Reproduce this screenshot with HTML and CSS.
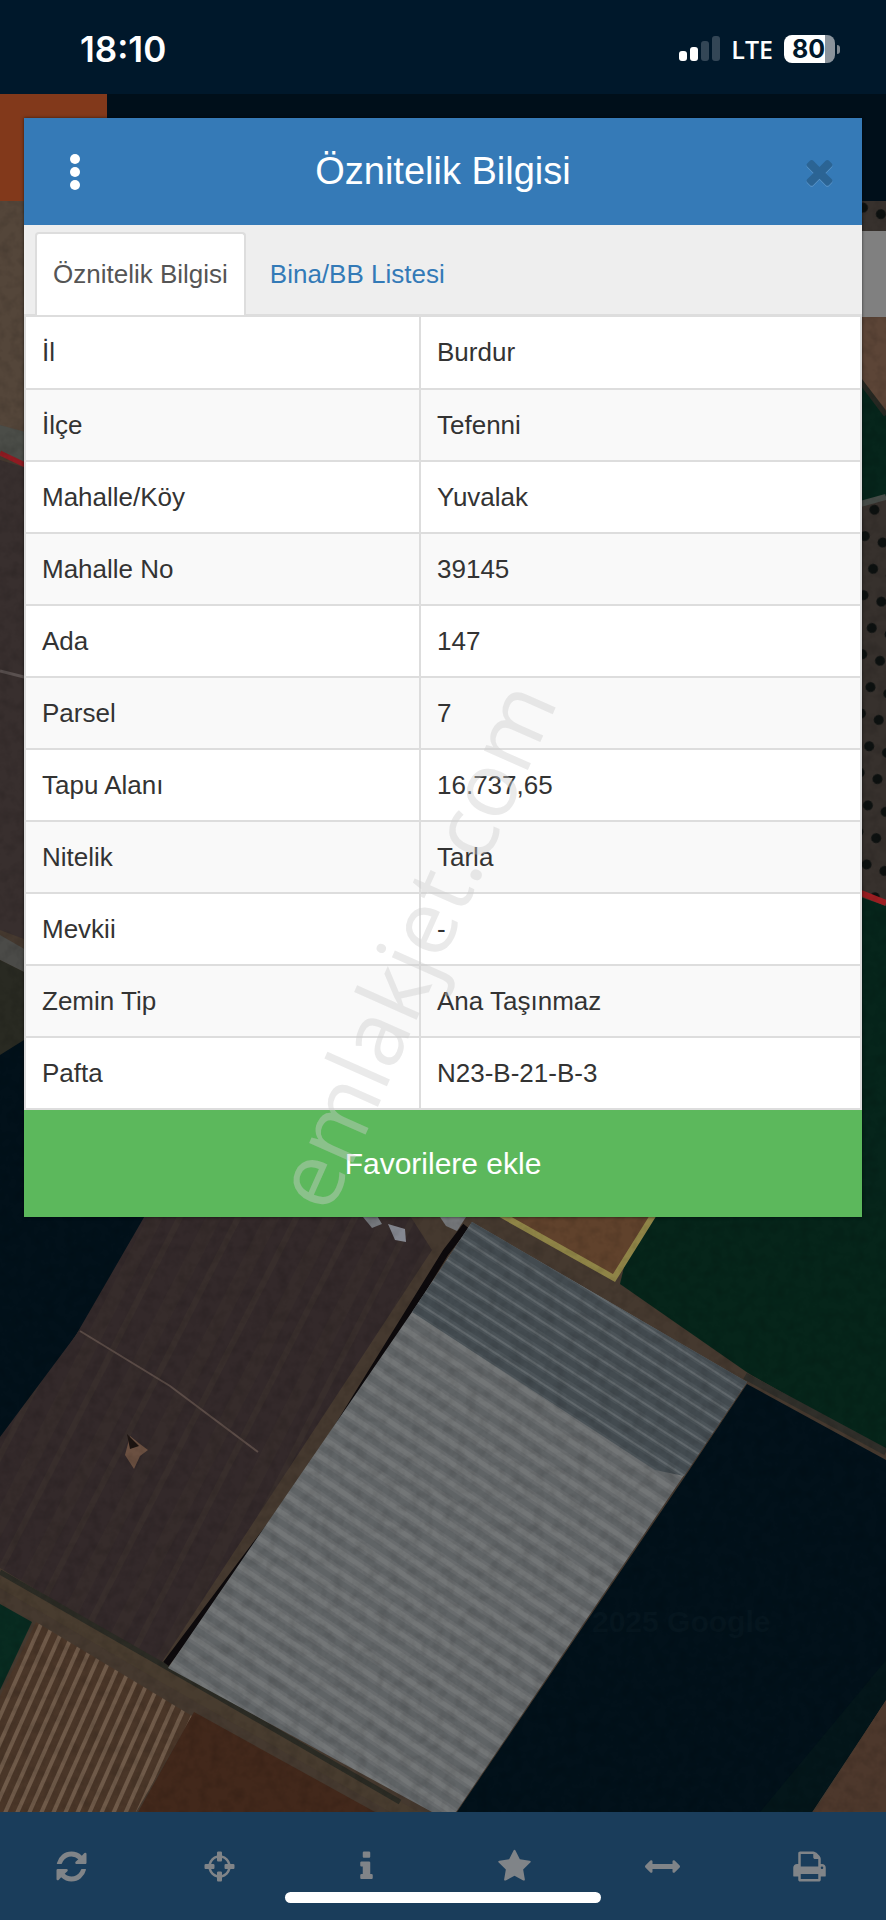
FILE: index.html
```html
<!DOCTYPE html>
<html lang="tr">
<head>
    <meta charset="UTF-8">
    <meta name="viewport" content="width=device-width, initial-scale=1.0">
    <title>Öznitelik Bilgisi</title>
    <link rel="stylesheet" href="styles.css">
</head>
<body>
    <header class="status-bar">
        <span class="clock">18:10</span>
        <div class="status-icons">
            <div class="signal">
                <i class="bar bar-1"></i>
                <i class="bar bar-2"></i>
                <i class="bar bar-3"></i>
                <i class="bar bar-4"></i>
            </div>
            <span class="network">LTE</span>
            <div class="battery"><span>80</span></div>
        </div>
    </header>

    <div class="navbar">
        <div class="navbar-brand"></div>
    </div>

    <main class="map">
        <svg class="map-image" viewBox="0 201 886 1611" preserveAspectRatio="xMidYMid slice" aria-hidden="true">
            <defs>
                <pattern id="plastic" width="40" height="17" patternUnits="userSpaceOnUse" patternTransform="rotate(34)">
                    <rect width="40" height="17" fill="#606466"/>
                    <rect width="40" height="11" y="3" fill="#696c6e"/>
                    <rect width="40" height="5" y="6" fill="#737677"/>
                </pattern>
                <pattern id="plasticDark" width="40" height="13" patternUnits="userSpaceOnUse" patternTransform="rotate(33)">
                    <rect width="40" height="13" fill="#434b50"/>
                    <rect width="40" height="7" y="3" fill="#4c5459"/>
                    <rect width="40" height="2" y="6" fill="#61686c"/>
                </pattern>
                <pattern id="soil" width="52" height="40" patternUnits="userSpaceOnUse" patternTransform="rotate(27)">
                    <rect width="52" height="40" fill="#33292a"/>
                    <rect width="14" height="40" x="8" fill="#362c2b"/>
                    <rect width="6" height="40" x="34" fill="#382e2c"/>
                </pattern>
                <pattern id="furrows" width="11" height="40" patternUnits="userSpaceOnUse" patternTransform="rotate(24)">
                    <rect width="11" height="40" fill="#4a3628"/>
                    <rect width="4" height="40" x="3" fill="#6f5a49"/>
                </pattern>
                <pattern id="trees" width="19" height="28" patternUnits="userSpaceOnUse" patternTransform="rotate(20)">
                    <rect width="19" height="28" fill="#37312d"/>
                    <ellipse cx="8" cy="12" rx="5" ry="5" fill="#0d1110"/>
                </pattern>
                <filter id="grain" x="0" y="0" width="100%" height="100%">
                    <feTurbulence type="fractalNoise" baseFrequency="0.09" numOctaves="3" seed="4"/>
                    <feColorMatrix values="0 0 0 0 0  0 0 0 0 0  0 0 0 0 0  0 0 0 -1.2 0.7"/>
                </filter>
            </defs>

            <rect y="201" width="886" height="1611" fill="#45392f"/>

            <!-- left side -->
            <path d="M0 201H40V440L0 425Z" fill="#54463a"/>
            <path d="M0 425L40 436V468L0 456Z" fill="#4b4d48"/>
            <path d="M0 460L40 472V945L0 930Z" fill="#382f2e"/>
            <path d="M0 671L40 681" stroke="#5a5150" stroke-width="3"/>
            <path d="M0 453L40 472" stroke="#8f1b22" stroke-width="5"/>
            <path d="M0 935L40 958V980L0 960Z" fill="#4b4b48"/>
            <path d="M0 960L40 980V1080L0 1070Z" fill="#292a22"/>
            <path d="M0 1055L40 1030V1217H154L76 1335L0 1450Z" fill="#02111a"/>

            <!-- right side -->
            <path d="M846 201H886V231H846Z" fill="url(#trees)"/>
            <path d="M846 317H886V410L846 360Z" fill="#5c4537"/>
            <path d="M846 360L886 415V500L846 510Z" fill="#06251b"/>
            <path d="M846 362L886 415" stroke="#262822" stroke-width="5"/>
            <path d="M846 508L886 496V900L846 888Z" fill="url(#trees)"/>
            <path d="M846 508L886 497" stroke="#454b47" stroke-width="6"/>
            <path d="M846 892L886 906V1217H846Z" fill="#06251b"/>
            <path d="M846 887L886 903" stroke="#9c1e22" stroke-width="6"/>

            <!-- green field -->
            <path d="M640 1200H886V1452L748 1373L620 1284Z" fill="#06251a"/>

            <!-- parcel with the yellow border -->
            <path d="M500 1214L614 1278L654 1214Z" fill="#60422c" stroke="#8f8447" stroke-width="6"/>

            <!-- ploughed field -->
            <path d="M154 1200H400L432 1250L160 1665L0 1568V1437L76 1335Z" fill="url(#soil)"/>
            <path d="M80 1331L170 1386L258 1452" fill="none" stroke="#5b4c47" stroke-width="2"/>
            <path d="M130 1436L140 1444L148 1450L140 1456L134 1469L125 1455Z" fill="#6b5041"/>
            <path d="M127 1434L139 1446L130 1449Z" fill="#1c1411"/>
            <path d="M363 1217L376 1214L382 1224L372 1228Z" fill="#74777c"/>
            <path d="M388 1224L405 1229L406 1242L395 1240Z" fill="#858891"/>
            <path d="M440 1217H466L457 1231L446 1226Z" fill="#75777a"/>

            <!-- roads -->
            <path d="M0 1580L168 1678L415 1818" fill="none" stroke="#483c2f" stroke-width="14"/>
            <path d="M0 1572L168 1668L400 1802" fill="none" stroke="#2b2b24" stroke-width="5"/>
            <path d="M745 1376L886 1452" fill="none" stroke="#302f2a" stroke-width="7"/>

            <!-- greenhouses -->
            <path d="M466 1226L446 1252L306 1478L166 1664" fill="none" stroke="#0d0a0c" stroke-width="7"/>
            <path d="M472 1222L747 1382L456 1812H432L168 1668L412 1312Z" fill="url(#plastic)"/>
            <path d="M472 1222L747 1382L684 1476L655 1470L412 1312Z" fill="url(#plasticDark)"/>

            <!-- dark field -->
            <path d="M747 1384L886 1460V1700L812 1812H457L684 1478Z" fill="#02111a"/>
            <path d="M886 1660V1700L812 1812H760Z" fill="#04161a"/>
            <path d="M886 1700V1812H814Z" fill="#4d382c"/>
            <text class="map-credit" x="592" y="1632">2025 Google</text>

            <!-- bottom left -->
            <path d="M0 1604L32 1622L0 1690Z" fill="#082b20"/>
            <path d="M36 1622L192 1716L136 1812H0V1696Z" fill="url(#furrows)"/>
            <path d="M194 1712L375 1812H138Z" fill="#42281b"/>

            <rect y="201" width="886" height="1611" filter="url(#grain)" opacity="0.2"/>

            <!-- map control at the right edge -->
            <path d="M846 231H886V317H846Z" fill="#808080"/>
        </svg>
    </main>

    <nav class="toolbar">
        <button type="button" class="tool-btn" aria-label="Yenile">
            <svg viewBox="0 0 1792 1792"><path d="M1639 1056q0 5-1 7-64 268-268 434.500t-478 166.500q-146 0-282.500-55t-243.500-157l-129 129q-19 19-45 19t-45-19-19-45v-448q0-26 19-45t45-19h448q26 0 45 19t19 45-19 45l-137 137q71 66 161 102t187 36q134 0 250-65t186-179q11-17 53-117 8-23 30-23h192q13 0 22.500 9.500t9.500 22.500zm25-800v448q0 26-19 45t-45 19h-448q-26 0-45-19t-19-45 19-45l138-138q-148-137-349-137-134 0-250 65t-186 179q-11 17-53 117-8 23-30 23h-199q-13 0-22.500-9.500t-9.500-22.500v-7q65-268 270-434.500t480-166.500q146 0 284 55.500t245 156.500l130-129q19-19 45-19t45 19 19 45z"/></svg>
        </button>
        <button type="button" class="tool-btn" aria-label="Konum">
            <svg viewBox="0 0 1792 1792"><path d="M1325 1024h-109q-26 0-45-19t-19-45v-128q0-26 19-45t45-19h109q-32-108-112.500-188.500t-188.500-112.500v109q0 26-19 45t-45 19h-128q-26 0-45-19t-19-45v-109q-108 32-188.500 112.500t-112.500 188.500h109q26 0 45 19t19 45v128q0 26-19 45t-45 19h-109q32 108 112.500 188.500t188.500 112.500v-109q0-26 19-45t45-19h128q26 0 45 19t19 45v109q108-32 188.500-112.500t112.500-188.500zm339-192v128q0 26-19 45t-45 19h-143q-37 161-154.500 278.500t-278.500 154.500v143q0 26-19 45t-45 19h-128q-26 0-45-19t-19-45v-143q-161-37-278.500-154.500t-154.500-278.500h-143q-26 0-45-19t-19-45v-128q0-26 19-45t45-19h143q37-161 154.500-278.500t278.500-154.500v-143q0-26 19-45t45-19h128q26 0 45 19t19 45v143q161 37 278.500 154.500t154.500 278.500h143q26 0 45 19t19 45z"/></svg>
        </button>
        <button type="button" class="tool-btn" aria-label="Bilgi">
            <svg viewBox="0 0 1792 1792"><path d="M1216 1344v128q0 26-19 45t-45 19h-512q-26 0-45-19t-19-45v-128q0-26 19-45t45-19h64v-384h-64q-26 0-45-19t-19-45v-128q0-26 19-45t45-19h384q26 0 45 19t19 45v576h64q26 0 45 19t19 45zm-128-1152v192q0 26-19 45t-45 19h-256q-26 0-45-19t-19-45v-192q0-26 19-45t45-19h256q26 0 45 19t19 45z"/></svg>
        </button>
        <button type="button" class="tool-btn" aria-label="Favoriler">
            <svg viewBox="0 0 1792 1792"><path d="M1728 647q0 22-26 48l-363 354 86 500q1 7 1 20 0 21-10.500 35.500t-30.500 14.500q-19 0-40-12l-449-236-449 236q-22 12-40 12-21 0-31.500-14.500t-10.500-35.500q0-6 2-20l86-500-364-354q-25-27-25-48 0-37 56-46l502-73 225-455q19-41 49-41t49 41l225 455 502 73q56 9 56 46z"/></svg>
        </button>
        <button type="button" class="tool-btn" aria-label="Ölçüm">
            <svg viewBox="0 0 1792 1792"><path d="M1792 896q0 26-19 45l-256 256q-19 19-45 19t-45-19-19-45v-128h-1024v128q0 26-19 45t-45 19-45-19l-256-256q-19-19-19-45t19-45l256-256q19-19 45-19t45 19 19 45v128h1024v-128q0-26 19-45t45-19 45 19l256 256q19 19 19 45z"/></svg>
        </button>
        <button type="button" class="tool-btn" aria-label="Yazdır">
            <svg viewBox="0 0 1792 1792"><path d="M448 1536h896v-256h-896v256zm0-640h896v-384h-160q-40 0-68-28t-28-68v-160h-640v640zm1152 64q0-26-19-45t-45-19-45 19-19 45 19 45 45 19 45-19 19-45zm128 0v416q0 13-9.500 22.500t-22.500 9.500h-224v160q0 40-28 68t-68 28h-960q-40 0-68-28t-28-68v-160h-224q-13 0-22.500-9.500t-9.500-22.500v-416q0-79 56.500-135.500t135.500-56.500h64v-544q0-40 28-68t68-28h672q40 0 88 20t76 48l152 152q28 28 48 76t20 88v256h64q79 0 135.500 56.500t56.500 135.500z"/></svg>
        </button>
        <div class="home-indicator"></div>
    </nav>

    <section class="modal" role="dialog" aria-labelledby="modalTitle">
        <div class="modal-header">
            <button type="button" class="header-btn menu-btn" aria-label="Menü">
                <svg viewBox="0 0 36 36"><circle cx="18" cy="5" r="5"/><circle cx="18" cy="18" r="5"/><circle cx="18" cy="31" r="5"/></svg>
            </button>
            <h1 id="modalTitle">Öznitelik Bilgisi</h1>
            <button type="button" class="header-btn close-btn" aria-label="Kapat">
                <svg viewBox="0 0 1792 1792"><path d="M1490 1322q0 40-28 68l-136 136q-28 28-68 28t-68-28l-294-294-294 294q-28 28-68 28t-68-28l-136-136q-28-28-28-68t28-68l294-294-294-294q-28-28-28-68t28-68l136-136q28-28 68-28t68 28l294 294 294-294q28-28 68-28t68 28l136 136q28 28 28 68t-28 68l-294 294 294 294q28 28 28 68z"/></svg>
            </button>
        </div>

        <div class="tabs">
            <a href="#oznitelik" class="tab active">Öznitelik Bilgisi</a>
            <a href="#bina" class="tab">Bina/BB Listesi</a>
        </div>

        <table class="info-table" id="oznitelik">
            <tbody>
                <tr><th scope="row">İl</th><td>Burdur</td></tr>
                <tr><th scope="row">İlçe</th><td>Tefenni</td></tr>
                <tr><th scope="row">Mahalle/Köy</th><td>Yuvalak</td></tr>
                <tr><th scope="row">Mahalle No</th><td>39145</td></tr>
                <tr><th scope="row">Ada</th><td>147</td></tr>
                <tr><th scope="row">Parsel</th><td>7</td></tr>
                <tr><th scope="row">Tapu Alanı</th><td>16.737,65</td></tr>
                <tr><th scope="row">Nitelik</th><td>Tarla</td></tr>
                <tr><th scope="row">Mevkii</th><td>-</td></tr>
                <tr><th scope="row">Zemin Tip</th><td>Ana Taşınmaz</td></tr>
                <tr><th scope="row">Pafta</th><td>N23-B-21-B-3</td></tr>
            </tbody>
        </table>

        <button type="button" class="favorite-btn">Favorilere ekle</button>
    </section>

    <div class="watermark">emlakjet.com</div>
</body>
</html>
```

FILE: styles.css
```css
* {
    margin: 0;
    padding: 0;
    box-sizing: border-box;
}

body {
    font-family: "Liberation Sans", Arial, sans-serif;
    font-size: 26px;
    color: #333;
    background: #00182b;
    min-height: 100vh;
    display: flex;
    flex-direction: column;
    position: relative;
    overflow-x: hidden;
}

button {
    border: none;
    background: none;
    font-family: inherit;
    cursor: pointer;
}

svg {
    display: block;
}

/* Status bar */
.status-bar {
    height: 94px;
    padding: 3px 51px 0 80px;
    display: flex;
    align-items: center;
    justify-content: space-between;
    color: #fff;
    font-family: Inter, sans-serif;
}

.clock {
    font-size: 35px;
    font-weight: 600;
}

.status-icons {
    display: flex;
    align-items: center;
    gap: 11px;
}

.signal {
    display: flex;
    align-items: flex-end;
    gap: 3px;
}

.bar {
    width: 8px;
    border-radius: 3px;
    background: #fff;
}

.bar-1 {
    height: 10px;
}

.bar-2 {
    height: 14px;
}

.bar-3 {
    height: 20px;
    background: #334656;
}

.bar-4 {
    height: 25px;
    background: #334656;
}

.network {
    font-family: "Open Sans", sans-serif;
    font-size: 25px;
    font-weight: 600;
    line-height: 28px;
}

.battery {
    position: relative;
    width: 51px;
    height: 28px;
    padding-right: 2px;
    border-radius: 8px;
    background: linear-gradient(90deg, #fff 80%, #8a939c 80%);
    color: #00182b;
    font-size: 25px;
    font-weight: 700;
    line-height: 28px;
    text-align: center;
}

.battery::after {
    content: '';
    position: absolute;
    right: -5px;
    top: 10px;
    width: 3px;
    height: 9px;
    border-radius: 0 4px 4px 0;
    background: #7d8790;
}

/* Page behind the dialog */
.navbar {
    height: 107px;
    background: #000f1a;
}

.navbar-brand {
    width: 107px;
    height: 100%;
    background: #82391b;
}

.map {
    flex: 1;
    position: relative;
    min-height: 1100px;
    overflow: hidden;
}

.map-image {
    position: absolute;
    top: 0;
    left: 0;
    width: 100%;
    height: 100%;
}

.map-credit {
    font-family: "Liberation Sans", Arial, sans-serif;
    font-size: 30px;
    font-weight: bold;
    fill: #06161f;
}

.toolbar {
    position: relative;
    height: 108px;
    display: flex;
    background: #1a3d5b;
}

.tool-btn {
    flex: 1;
    display: flex;
    align-items: center;
    justify-content: center;
    padding-right: 5px;
}

.tool-btn svg {
    width: 35px;
    height: 35px;
    fill: #808488;
}

.home-indicator {
    position: absolute;
    left: 50%;
    bottom: 17px;
    width: 316px;
    height: 11px;
    border-radius: 6px;
    background: #fff;
    transform: translateX(-50%);
}

/* Dialog */
.modal {
    position: absolute;
    top: 118px;
    left: 24px;
    right: 24px;
    background: #fff;
    box-shadow: 0 0 3px rgba(0, 0, 0, 0.6);
}

.modal-header {
    height: 107px;
    display: flex;
    align-items: center;
    background: #357ab7;
    color: #fff;
}

.modal-header h1 {
    flex: 1;
    font-size: 38px;
    font-weight: normal;
    text-align: center;
}

.header-btn {
    width: 86px;
    height: 100%;
    display: flex;
    align-items: center;
    justify-content: center;
}

.menu-btn {
    padding-left: 16px;
}

.menu-btn svg {
    width: 36px;
    height: 36px;
    fill: #fff;
}

.close-btn svg {
    width: 39px;
    height: 39px;
    fill: #2b6494;
    filter: drop-shadow(0 1px 0 #5a94c8);
}

.tabs {
    height: 92px;
    padding: 7px 11px 0;
    display: flex;
    gap: 6px;
    background: #eee;
    border-bottom: 3px solid #ddd;
}

.tab {
    display: flex;
    align-items: center;
    padding: 0 16px;
    border: 2px solid transparent;
    border-bottom: none;
    color: #337ab7;
    text-decoration: none;
}

.tab.active {
    margin-bottom: -1px;
    padding-bottom: 1px;
    background: #fff;
    border-color: #ddd;
    border-radius: 4px 4px 0 0;
    color: #555;
}

.info-table {
    width: 100%;
    border-collapse: collapse;
    table-layout: fixed;
    border: 2px solid #ddd;
    border-top: none;
}

.info-table th,
.info-table td {
    height: 72px;
    padding: 0 16px;
    border: 2px solid #ddd;
    font-weight: normal;
    text-align: left;
}

.info-table tr:first-child th,
.info-table tr:first-child td {
    border-top: none;
}

.info-table th {
    width: 395px;
}

.info-table tr:nth-child(even) {
    background: #f9f9f9;
}

.favorite-btn {
    display: block;
    width: 100%;
    height: 107px;
    background: #5cb85c;
    color: #fff;
    font-size: 30px;
}

.watermark {
    position: absolute;
    top: calc(50% - 16px);
    left: calc(50% - 31px);
    font-family: "Open Sans", sans-serif;
    font-size: 90px;
    line-height: 1;
    color: rgba(205, 205, 205, 0.42);
    transform: translate(-50%, -50%) rotate(-66deg);
    pointer-events: none;
}
```
